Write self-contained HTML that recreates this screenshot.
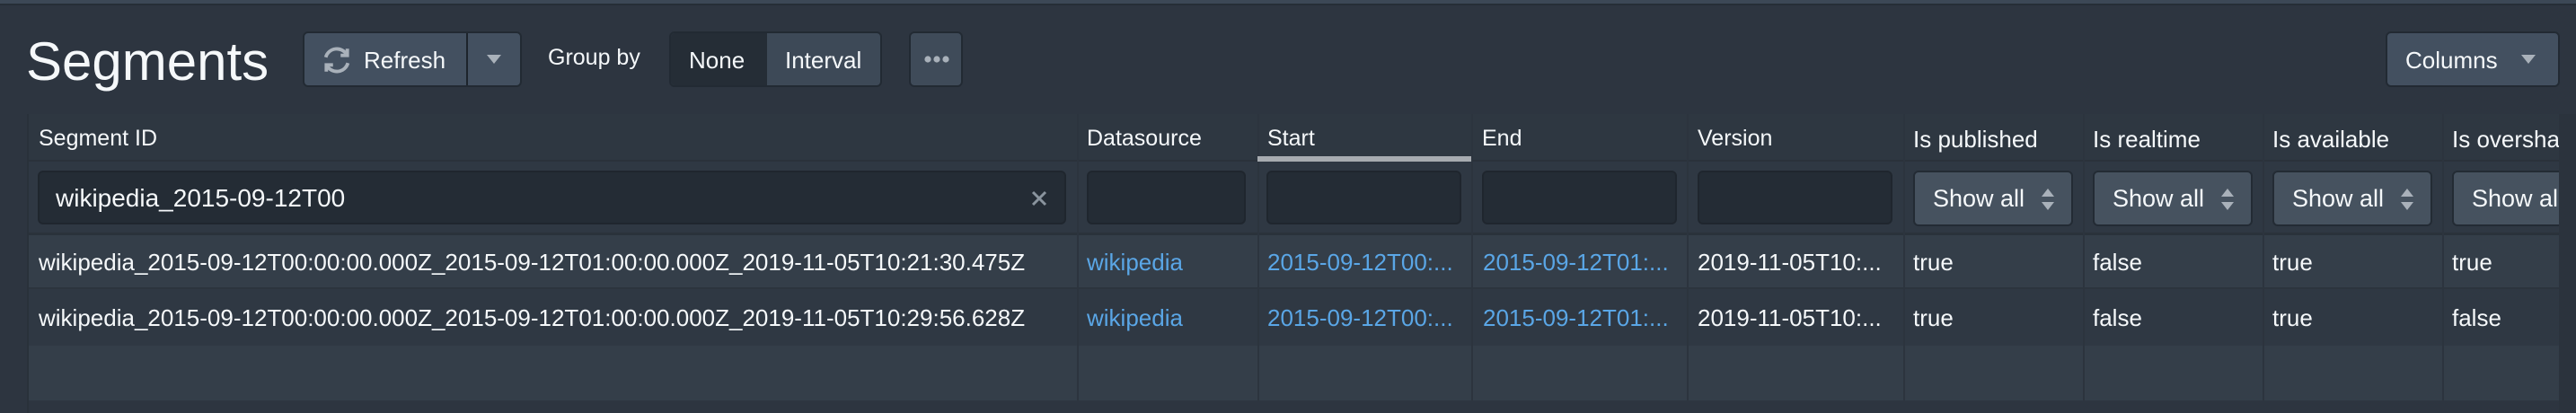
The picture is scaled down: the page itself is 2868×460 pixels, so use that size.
<!DOCTYPE html>
<html><head><meta charset="utf-8"><style>
*{box-sizing:border-box;margin:0;padding:0}
body{width:2868px;height:460px;background:#2d3540;font-family:"Liberation Sans",Arial,sans-serif;color:#f5f8fa;position:relative;overflow:hidden}
.abs{position:absolute}
.top{left:0;top:0;width:2868px;height:6px;background:#3c4856;border-bottom:2px solid #262e37}
.btn{position:absolute;top:35px;height:62px;background:#435060;border:2px solid #222a33;border-radius:6px;font-size:26px;display:flex;align-items:center;color:#f5f8fa}
.t{position:absolute;white-space:nowrap;font-size:25px}
.col{position:absolute;top:127px;height:319px;border-left:2px solid #2c343e}
.inp{position:absolute;top:190px;height:60px;background:#242c35;border:2px solid #1f262e;border-radius:6px}
.sel{position:absolute;top:190px;height:62px;background:#46525f;border:2px solid #232b34;border-radius:6px;font-size:27px;display:flex;align-items:center;padding-left:20px}
.link{color:#5aa6e6}
.cell{position:absolute;white-space:nowrap;overflow:hidden;font-size:26px}
</style></head><body>
<div class="abs top"></div>
<div class="t" style="left:29px;top:34px;font-size:60px;color:#f5f8fa">Segments</div>
<div class="btn" style="left:337px;width:244px">
  <svg class="abs" style="left:19px;top:13px" width="34" height="34" viewBox="0 0 16 16"><path d="M13.5 2v3.5H10M2.5 14v-3.5H6" fill="none" stroke="#a9b1ba" stroke-width="1.8"/><path d="M13.3 5.3A6 6 0 0 0 2.2 6.5M2.7 10.7a6 6 0 0 0 11.1-1.2" fill="none" stroke="#a9b1ba" stroke-width="1.8"/></svg>
  <span class="abs" style="left:66px;top:15px">Refresh</span>
  <div class="abs" style="left:180px;top:0;width:2px;height:58px;background:#1d242c"></div>
  <svg class="abs" style="left:203px;top:24px" width="16" height="10"><path d="M0 0H16L8 10Z" fill="#a9b1ba"/></svg>
</div>
<div class="t" style="left:610px;top:50px;font-size:25px">Group by</div>
<div class="btn" style="left:745px;width:237px;background:#3d4957">
  <div class="abs" style="left:0;top:0;width:107px;height:58px;background:#252d36;border-radius:4px 0 0 4px"></div>
  <span class="abs" style="left:20px;top:15px">None</span>
  <span class="abs" style="left:127px;top:15px">Interval</span>
</div>
<div class="btn" style="left:1012px;width:60px;background:#3f4b59">
  <svg class="abs" style="left:14px;top:24px" width="30" height="10"><circle cx="5" cy="5" r="3.6" fill="#a9b1ba"/><circle cx="15" cy="5" r="3.6" fill="#a9b1ba"/><circle cx="25" cy="5" r="3.6" fill="#a9b1ba"/></svg>
</div>
<div class="btn" style="left:2656px;width:194px">
  <span class="abs" style="left:20px;top:15px">Columns</span>
  <svg class="abs" style="left:149px;top:24px" width="16" height="10"><path d="M0 0H16L8 10Z" fill="#a9b1ba"/></svg>
</div>

<div class="abs" style="left:32px;top:127px;width:2817px;height:333px;background:#2f3843"></div>
<div class="abs" style="left:32px;top:127px;width:2817px;height:53px;background:#2e3741;border-bottom:2px solid #2a323b"></div>
<div class="abs" style="left:32px;top:180px;width:2817px;height:82px;background:#2f3843;border-bottom:3px solid #2a323b"></div>
<div class="abs" style="left:32px;top:262px;width:2817px;height:60px;background:#343e49;border-bottom:2px solid #2c343e"></div>
<div class="abs" style="left:32px;top:322px;width:2817px;height:63px;background:#2f3843"></div>
<div class="abs" style="left:32px;top:385px;width:2817px;height:61px;background:#343e49"></div>
<div class="abs" style="left:32px;top:446px;width:2817px;height:14px;background:#2d3540"></div>
<div class="abs" style="left:30px;top:127px;width:2px;height:333px;background:#29313a"></div>
<div class="abs" style="left:2849px;top:127px;width:19px;height:333px;background:#2b333d"></div>

<div class="col" style="left:1199px"></div><div class="col" style="left:1400px"></div><div class="col" style="left:1638px"></div><div class="col" style="left:1878px"></div><div class="col" style="left:2119px"></div><div class="col" style="left:2319px"></div><div class="col" style="left:2519px"></div><div class="col" style="left:2719px"></div>
<div class="abs" style="left:1400px;top:174px;width:238px;height:6px;background:#a7abb0"></div>

<div class="t" style="left:43px;top:140px">Segment ID</div>
<div class="t" style="left:1210px;top:140px">Datasource</div>
<div class="t" style="left:1411px;top:140px">Start</div>
<div class="t" style="left:1650px;top:140px">End</div>
<div class="t" style="left:1890px;top:140px">Version</div>
<div class="t" style="left:2130px;top:140px;font-size:26px">Is published</div>
<div class="t" style="left:2330px;top:140px;font-size:26px">Is realtime</div>
<div class="t" style="left:2530px;top:140px;font-size:26px">Is available</div>
<div class="cell" style="left:2730px;top:140px;width:119px">Is overshadowed</div>

<div class="inp" style="left:42px;width:1145px"><span class="abs" style="left:18px;top:13px;font-size:28px">wikipedia_2015-09-12T00</span>
<svg class="abs" style="left:1104px;top:20px" width="18" height="18"><path d="M2 2L16 16M16 2L2 16" stroke="#8a949e" stroke-width="3"/></svg></div>
<div class="inp" style="left:1210px;width:177px"></div>
<div class="inp" style="left:1410px;width:217px"></div>
<div class="inp" style="left:1650px;width:217px"></div>
<div class="inp" style="left:1890px;width:217px"></div>
<div class="sel" style="left:2130px;width:178px">Show all<svg class="abs" style="left:140px;top:17px" width="16" height="26"><path d="M1 10L8 1L15 10ZM1 16L8 25L15 16Z" fill="#a9b1ba"/></svg></div>
<div class="sel" style="left:2330px;width:178px">Show all<svg class="abs" style="left:140px;top:17px" width="16" height="26"><path d="M1 10L8 1L15 10ZM1 16L8 25L15 16Z" fill="#a9b1ba"/></svg></div>
<div class="sel" style="left:2530px;width:178px">Show all<svg class="abs" style="left:140px;top:17px" width="16" height="26"><path d="M1 10L8 1L15 10ZM1 16L8 25L15 16Z" fill="#a9b1ba"/></svg></div>
<div class="abs" style="left:2730px;top:190px;width:119px;height:62px;overflow:hidden"><div class="sel" style="left:0;top:0;width:178px">Show all</div></div>

<div class="cell" style="left:43px;top:277px;width:1150px">wikipedia_2015-09-12T00:00:00.000Z_2015-09-12T01:00:00.000Z_2019-11-05T10:21:30.475Z</div>
<div class="cell link" style="left:1210px;top:277px">wikipedia</div>
<div class="cell link" style="left:1411px;top:277px">2015-09-12T00:...</div>
<div class="cell link" style="left:1651px;top:277px">2015-09-12T01:...</div>
<div class="cell" style="left:1890px;top:277px">2019-11-05T10:...</div>
<div class="cell" style="left:2130px;top:277px">true</div>
<div class="cell" style="left:2330px;top:277px">false</div>
<div class="cell" style="left:2530px;top:277px">true</div>
<div class="cell" style="left:2730px;top:277px">true</div>

<div class="cell" style="left:43px;top:339px;width:1150px">wikipedia_2015-09-12T00:00:00.000Z_2015-09-12T01:00:00.000Z_2019-11-05T10:29:56.628Z</div>
<div class="cell link" style="left:1210px;top:339px">wikipedia</div>
<div class="cell link" style="left:1411px;top:339px">2015-09-12T00:...</div>
<div class="cell link" style="left:1651px;top:339px">2015-09-12T01:...</div>
<div class="cell" style="left:1890px;top:339px">2019-11-05T10:...</div>
<div class="cell" style="left:2130px;top:339px">true</div>
<div class="cell" style="left:2330px;top:339px">false</div>
<div class="cell" style="left:2530px;top:339px">true</div>
<div class="cell" style="left:2730px;top:339px">false</div>
</body></html>
